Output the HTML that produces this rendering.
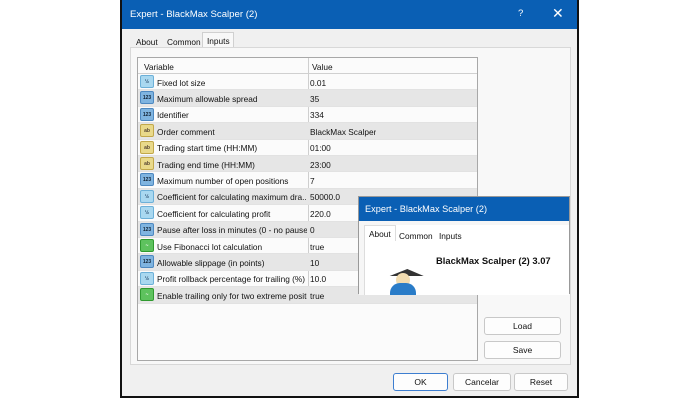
<!DOCTYPE html>
<html><head><meta charset="utf-8"><style>
*{box-sizing:border-box;margin:0;padding:0}
body{width:700px;height:400px;background:#fff;position:relative;overflow:hidden;font-family:"Liberation Sans",sans-serif;font-size:8.3px;color:#111}
.win{position:absolute;left:120px;top:0;width:459px;height:398px;background:#f0f0f0;border:2px solid #111;border-top:none}
.tb{position:absolute;left:0;top:0;right:0;height:29px;background:#0a5fb4;color:#fff;font-size:9.6px}
.tb .t{position:absolute;left:8px;top:9px}
.tab{position:absolute;top:0}
.panel{position:absolute;left:8px;top:47px;width:441px;height:318px;background:#f8f8f8;border:1px solid #d8d8d8}
.tbl{position:absolute;left:15px;top:57px;width:341px;height:304px;border:1px solid #a8a8a8;background:#fbfbfb}
.row{position:absolute;left:0;width:339px;height:16.4px;border-bottom:1px solid #e2e2e2}
.row.g{background:#e6e6e6}
.row span{position:absolute;top:3.5px;white-space:nowrap;overflow:hidden}
.row .v{left:172px}
.row .n{left:19px;width:150px}
.col{position:absolute;left:170px;top:0;width:1px;height:245px;background:#cfcfcf}
.ic{position:absolute;left:2px;top:1px;width:14px;height:13px;border-radius:2px;font-size:5px;font-weight:bold;text-align:center;line-height:13px}
.b{background:#7fb4e0;color:#123;border:1px solid #4d88c0}
.c{background:#a9d8f0;color:#246;border:1px solid #6cb0d8}
.y{background:#e9d98a;color:#543;border:1px solid #c2a84a}
.gr{background:#5ec25e;color:#fff;border:1px solid #2f9a2f}
.btn{position:absolute;background:#fdfdfd;border:1px solid #c8c8c8;border-radius:3px;text-align:center;font-size:8.5px;line-height:16px}
.dlg{position:absolute;left:358px;top:196px;width:212px;height:98px;background:#fff;border:1px solid #999}
</style></head><body>
<div class="win">
 <div class="tb"><span class="t">Expert - BlackMax Scalper (2)</span><span style="position:absolute;left:396px;top:8px">?</span><span style="position:absolute;left:430px;top:5px;font-size:14px">✕</span></div>
 <div class="tab" style="left:14px;top:37px;position:absolute">About</div>
 <div class="tab" style="left:45px;top:37px;position:absolute">Common</div>
 <div style="position:absolute;left:80px;top:32px;width:32px;height:16px;background:#f8f8f8;border:1px solid #d0d0d0;border-bottom:none;padding:3px 0 0 4px">Inputs</div>
 <div class="panel"></div>
 <div class="btn" style="left:362px;top:317px;width:77px;height:18px">Load</div>
 <div class="btn" style="left:362px;top:341px;width:77px;height:18px">Save</div>
 <div class="btn" style="left:271px;top:373px;width:55px;height:18px;border-color:#3d7ed0">OK</div>
 <div class="btn" style="left:331px;top:373px;width:58px;height:18px">Cancelar</div>
 <div class="btn" style="left:392px;top:373px;width:54px;height:18px">Reset</div>
</div>
<div class="tbl" style="left:137px">
 <div class="col"></div>
 <div style="position:absolute;left:6px;top:4px">Variable</div><div style="position:absolute;left:174px;top:4px">Value</div>
 <div style="position:absolute;left:0;top:15px;width:339px;height:1px;background:#d0d0d0"></div>
 <div class="row" style="top:16px"><div class="ic c">½</div><span class="n">Fixed lot size</span><span class="v">0.01</span></div>
 <div class="row g" style="top:32.4px"><div class="ic b">123</div><span class="n">Maximum allowable spread</span><span class="v">35</span></div>
 <div class="row" style="top:48.8px"><div class="ic b">123</div><span class="n">Identifier</span><span class="v">334</span></div>
 <div class="row g" style="top:65.2px"><div class="ic y">ab</div><span class="n">Order comment</span><span class="v">BlackMax Scalper</span></div>
 <div class="row" style="top:81.6px"><div class="ic y">ab</div><span class="n">Trading start time (HH:MM)</span><span class="v">01:00</span></div>
 <div class="row g" style="top:98px"><div class="ic y">ab</div><span class="n">Trading end time (HH:MM)</span><span class="v">23:00</span></div>
 <div class="row" style="top:114.4px"><div class="ic b">123</div><span class="n">Maximum number of open positions</span><span class="v">7</span></div>
 <div class="row g" style="top:130.8px"><div class="ic c">½</div><span class="n">Coefficient for calculating maximum dra...</span><span class="v">50000.0</span></div>
 <div class="row" style="top:147.2px"><div class="ic c">½</div><span class="n">Coefficient for calculating profit</span><span class="v">220.0</span></div>
 <div class="row g" style="top:163.6px"><div class="ic b">123</div><span class="n">Pause after loss in minutes (0 - no pause)</span><span class="v">0</span></div>
 <div class="row" style="top:180px"><div class="ic gr">~</div><span class="n">Use Fibonacci lot calculation</span><span class="v">true</span></div>
 <div class="row g" style="top:196.4px"><div class="ic b">123</div><span class="n">Allowable slippage (in points)</span><span class="v">10</span></div>
 <div class="row" style="top:212.8px"><div class="ic c">½</div><span class="n">Profit rollback percentage for trailing (%)</span><span class="v">10.0</span></div>
 <div class="row g" style="top:229.2px"><div class="ic gr">~</div><span class="n">Enable trailing only for two extreme positi...</span><span class="v">true</span></div>
</div>
<div class="dlg">
 <div style="position:absolute;left:0;top:0;right:0;height:24px;background:#0a5fb4;color:#fff;font-size:9.2px;padding:7px 0 0 6px">Expert - BlackMax Scalper (2)</div>
 <div style="position:absolute;left:0;top:24px;right:0;height:74px;background:#f6f6f6"></div>
 <div style="position:absolute;left:5px;top:28px;right:0;height:70px;background:#fff;border-left:1px solid #ddd"></div>
 <div style="position:absolute;left:5px;top:28px;width:32px;height:16px;background:#fff;border:1px solid #ddd;border-bottom:none"></div>
 <div style="position:absolute;left:10px;top:32px">About</div>
 <div style="position:absolute;left:40px;top:34px">Common</div>
 <div style="position:absolute;left:80px;top:34px">Inputs</div>
 <div style="position:absolute;left:31px;top:72px;width:0;height:0;border-left:17px solid transparent;border-right:17px solid transparent;border-bottom:7px solid #333;transform:skewX(-5deg)"></div>
 <div style="position:absolute;left:37px;top:76px;width:14px;height:14px;border-radius:50%;background:#f2dcb0"></div>
 <div style="position:absolute;left:31px;top:86px;width:26px;height:12px;border-radius:10px 10px 0 0;background:#2a7cc8"></div>
 <div style="position:absolute;left:77px;top:58px;font-weight:bold;font-size:9.4px">BlackMax Scalper (2) 3.07</div>
</div>
</body></html>
